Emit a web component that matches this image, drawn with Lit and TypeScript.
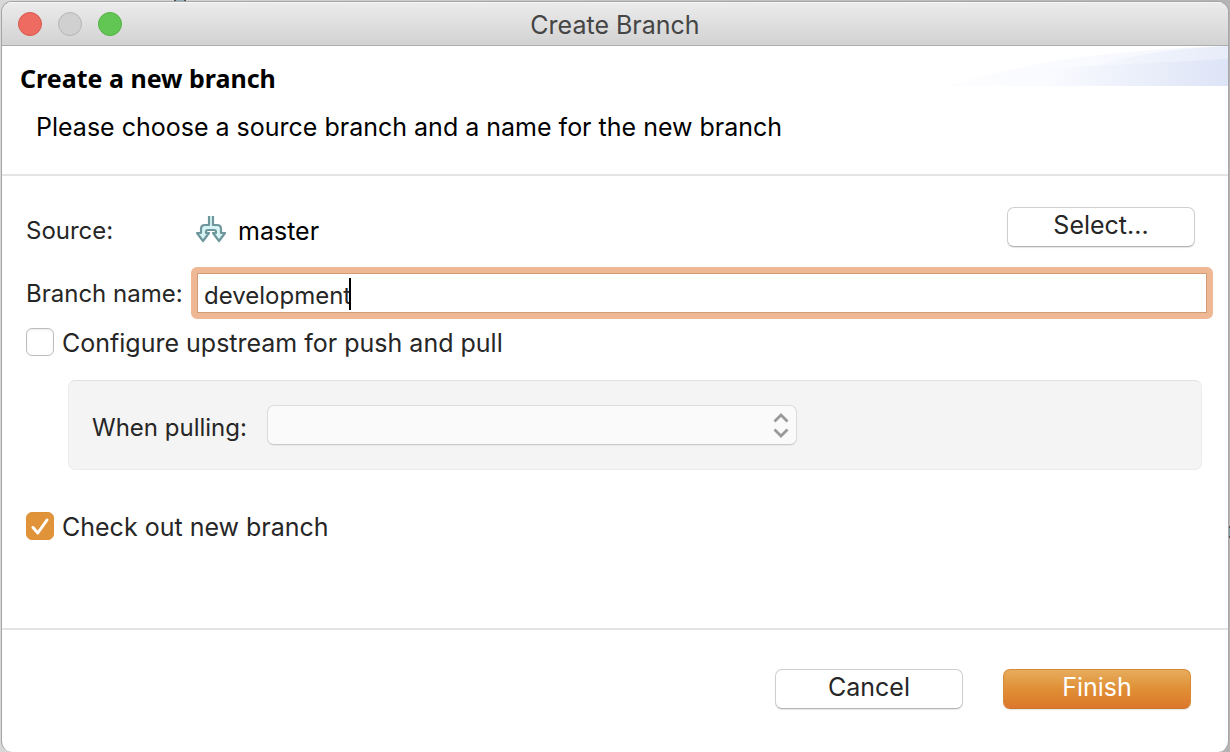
import { LitElement, html, css } from "lit";
import { customElement, state } from "lit/decorators.js";

@customElement("app-root")
export class AppRoot extends LitElement {
  static styles = css`
    :host {
      display: flex;
      min-height: 100vh;
      box-sizing: border-box;
      padding: 1px 1px 0;
      background:
        linear-gradient(90deg, #4a4f52 2px, #8fb0ba 2px 10px, #4a4f52 10px) 174px 0 / 12px 1px no-repeat,
        linear-gradient(#4f5659 2px, #7f9ba6 2px 10px, #4f5659 10px) 100% 526px / 1px 12px no-repeat,
        linear-gradient(90deg, #d8d8d8, #b4b4b4);
      font-family: Inter, "Liberation Sans", sans-serif;
      font-size: 24px;
      line-height: 32px;
      color: #262626;
    }
    * {
      box-sizing: border-box;
    }
    .window {
      flex: 1;
      display: flex;
      flex-direction: column;
      border: 1px solid #a6a6a6;
      border-bottom: 0;
      border-radius: 11px;
      overflow: hidden;
      background: #fff;
    }
    .titlebar {
      display: grid;
      grid-template-columns: 1fr auto 1fr;
      align-items: center;
      height: 44px;
      padding: 0 16px;
      background: linear-gradient(#ececec, #d2d2d2);
      border-bottom: 1px solid #adadad;
      box-shadow: inset 0 1px #f6f6f6;
    }
    .lights {
      display: flex;
      gap: 16px;
    }
    .light {
      width: 24px;
      height: 24px;
      padding: 0;
      border: 1px solid #b5b5b5;
      border-radius: 50%;
      background: #d0d0d0;
    }
    .close {
      background: #ed6b60;
      border-color: #d65a50;
    }
    .zoom {
      background: #62c654;
      border-color: #54b045;
    }
    .title {
      margin: 0;
      padding-top: 2px;
      font-size: 25px;
      font-weight: 400;
      color: #454545;
    }
    .banner {
      position: relative;
      padding: 16px 18px 31px;
      border-bottom: 2px solid #e4e4e4;
      color: #000;
    }
    .swoosh {
      position: absolute;
      top: 0;
      right: 0;
      width: 280px;
      height: 40px;
    }
    .heading {
      position: relative;
      margin: 0;
      font-family: "Noto Sans", "Open Sans", sans-serif;
      font-size: 25px;
      font-weight: 700;
    }
    .message {
      margin: 17px 0 0 16px;
      font-size: 25px;
    }
    .form {
      flex: 1;
      padding: 31px 15px 32px 24px;
    }
    .row {
      display: flex;
      align-items: center;
    }
    .caption {
      flex: none;
      width: 165px;
      padding-top: 2px;
    }
    .source {
      flex: 1;
      display: flex;
      align-items: center;
      gap: 12px;
      padding-left: 5px;
      font-size: 25px;
      color: #000;
    }
    .button {
      width: 188px;
      height: 40px;
      padding: 0 0 5px;
      border: 1px solid #cfcfcf;
      border-bottom-color: #b5b5b5;
      border-radius: 7px;
      background: #fff;
      box-shadow: 0 1px 1px #0000001a;
      font: inherit;
      font-size: 25px;
      line-height: 32px;
      color: #262626;
    }
    .pick {
      margin-right: 18px;
    }
    .source-row {
      height: 40px;
    }
    .source-row .caption,
    .source-row .source {
      padding-top: 8px;
    }
    .group label {
      padding-top: 6px;
    }
    .name-row {
      margin-top: 20px;
    }
    .field {
      flex: 1;
      min-width: 0;
      height: 52px;
      display: flex;
      align-items: center;
      padding: 2px 7px 0;
      border: 6px solid #eeb894;
      border-radius: 6px;
      box-shadow: inset 0 0 0 1px #d19b76;
    }
    .name {
      field-sizing: content;
      min-width: 2px;
      padding: 4px 0 0;
      border: 0;
      outline: 0;
      background: none;
      font: inherit;
      color: inherit;
      caret-color: transparent;
    }
    .caret {
      flex: none;
      width: 2px;
      height: 32px;
      margin-left: -2px;
      background: #000;
    }
    .check {
      display: flex;
      align-items: center;
      gap: 8px;
      margin-top: 8px;
      font-size: 25px;
    }
    .box {
      appearance: none;
      flex: none;
      width: 28px;
      height: 28px;
      margin: 0 0 2px;
      border: 1px solid #bcbcbc;
      border-radius: 6px;
      background: #fff;
      box-shadow: inset 0 1px 2px #00000014;
    }
    .box:checked {
      border-color: #df9138;
      box-shadow: none;
      background: #e09338
        url('data:image/svg+xml,<svg xmlns="http://www.w3.org/2000/svg" viewBox="0 0 26 26"><path d="M6 14.500 10.800 20 20 7" fill="none" stroke="white" stroke-width="3" stroke-linecap="round" stroke-linejoin="round"/></svg>');
    }
    .group {
      display: flex;
      align-items: center;
      gap: 20px;
      height: 90px;
      margin: 21px 11px 41px 42px;
      padding: 0 23px;
      border: 1px solid #ececec;
      border-top-color: #e2e2e2;
      border-radius: 7px;
      background: #f4f4f4;
    }
    .picker {
      position: relative;
      flex: 0 1 530px;
      height: 40px;
    }
    .select {
      appearance: none;
      display: block;
      width: 100%;
      height: 100%;
      border: 1px solid #dcdcdc;
      border-bottom-color: #cbcbcb;
      border-radius: 7px;
      background: #fafafa;
      box-shadow: 0 1px 1px #0000000d;
      font: inherit;
      opacity: 1;
    }
    .chevrons {
      position: absolute;
      top: 8px;
      right: 8px;
      pointer-events: none;
    }
    .footer {
      display: flex;
      justify-content: flex-end;
      gap: 40px;
      padding: 39px 37px 43px;
      border-top: 2px solid #e4e4e4;
    }
    .primary {
      border-color: #d98a35 #d98a35 #d0742c;
      background: linear-gradient(#e6ad5d, #e08f35 50%, #dc772c);
      color: #fff;
    }
  `;

  @state() private branch = "development";
  @state() private upstream = false;
  @state() private checkout = true;

  render() {
    return html`
      <main class="window">
        <header class="titlebar">
          <div class="lights">
            <button class="light close" aria-label="Close"></button>
            <button class="light" aria-label="Minimize" disabled></button>
            <button class="light zoom" aria-label="Zoom"></button>
          </div>
          <h1 class="title">Create Branch</h1>
        </header>

        <section class="banner">
          <svg class="swoosh" viewBox="0 0 280 40" preserveAspectRatio="none" aria-hidden="true">
            <defs>
              <linearGradient id="far"><stop offset="0" stop-color="#fdfdff" /><stop offset=".4" stop-color="#fafbff" /><stop offset="1" stop-color="#f3f6fd" /></linearGradient>
              <linearGradient id="mid"><stop offset="0" stop-color="#f6f8fe" /><stop offset="1" stop-color="#e7ecf9" /></linearGradient>
              <linearGradient id="near"><stop offset="0" stop-color="#fdfdff" /><stop offset=".35" stop-color="#fafbff" /><stop offset="1" stop-color="#dde4f6" /></linearGradient>
            </defs>
            <path d="M0 40Q110 5 280 0V40Z" fill="url(#far)" />
            <path d="M144 21Q195 4 280 0V40H144Z" fill="url(#mid)" />
            <path d="M0 40Q50 25 144 20T280 13V40Z" fill="url(#near)" />
          </svg>
          <h2 class="heading">Create a new branch</h2>
          <p class="message">Please choose a source branch and a name for the new branch</p>
        </section>

        <section class="form">
          <div class="row source-row">
            <span class="caption">Source:</span>
            <span class="source">
              <svg width="30" height="30" viewBox="0 0 30 30" aria-hidden="true">
                <path
                  d="M13 0V9H9Q5 9 5 13V17H1L7 25L13 17H10V16Q10 14 12 14H18Q20 14 20 16V17H17L23 25L29 17H25V13Q25 9 21 9H17V0"
                  fill="#d6f3f6"
                  stroke="#6d979b"
                  stroke-width="2.200"
                  stroke-linejoin="round"
                />
              </svg>
              master
            </span>
            <button class="button pick">Select...</button>
          </div>

          <div class="row name-row">
            <label class="caption" for="name">Branch name:</label>
            <div class="field">
              <input
                id="name"
                class="name"
                type="text"
                spellcheck="false"
                .value=${this.branch}
                @input=${(e: Event) => (this.branch = (e.target as HTMLInputElement).value)}
              />
              <span class="caret"></span>
            </div>
          </div>

          <label class="check">
            <input
              class="box"
              type="checkbox"
              .checked=${this.upstream}
              @change=${() => (this.upstream = !this.upstream)}
            />
            Configure upstream for push and pull
          </label>

          <div class="group">
            <label for="pulling">When pulling:</label>
            <div class="picker">
              <select id="pulling" class="select" ?disabled=${!this.upstream}></select>
              <svg class="chevrons" width="16" height="25" viewBox="0 0 16 25" aria-hidden="true">
                <path
                  d="M1.500 8.500 8 2 14.500 8.500M1.500 16.500 8 23 14.500 16.500"
                  fill="none"
                  stroke="#999"
                  stroke-width="2.800"
                />
              </svg>
            </div>
          </div>

          <label class="check">
            <input
              class="box"
              type="checkbox"
              .checked=${this.checkout}
              @change=${() => (this.checkout = !this.checkout)}
            />
            Check out new branch
          </label>
        </section>

        <footer class="footer">
          <button class="button">Cancel</button>
          <button class="button primary">Finish</button>
        </footer>
      </main>
    `;
  }
}
